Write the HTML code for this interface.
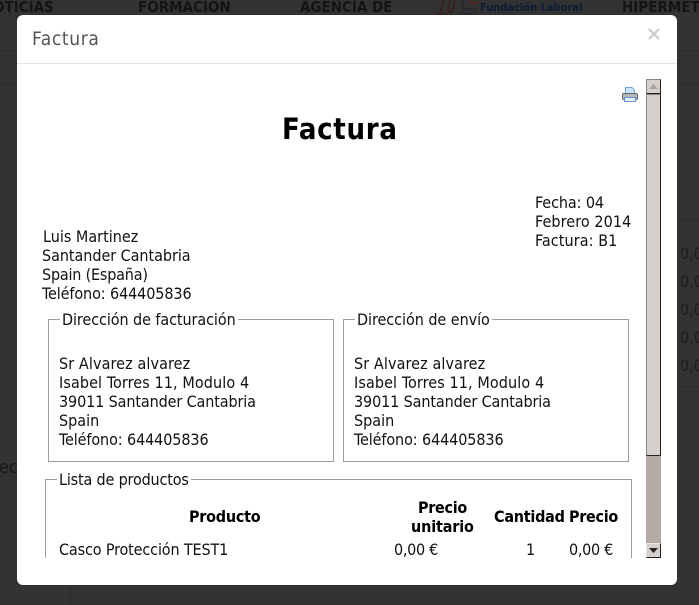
<!DOCTYPE html>
<html><head><meta charset="utf-8"><style>
html,body{margin:0;padding:0}
body{width:699px;height:605px;overflow:hidden;position:relative;background:#323232;font-family:"DejaVu Sans Condensed","DejaVu Sans",sans-serif;font-size:16px;color:#111}
.a{position:absolute;white-space:nowrap;line-height:19px}
.bg{color:#141414;font-weight:bold;font-size:15px}
.b{font-weight:bold;color:#000}
.l{position:absolute;background:#2a2a2a}
#m{position:absolute;left:17px;top:15px;width:660px;height:570px;background:#fff;border-radius:6px;overflow:hidden}
#m .a{margin-left:-17px;margin-top:-15px}
.fs{position:absolute;border:1px solid #a39c9c;box-sizing:border-box;margin-left:-17px;margin-top:-15px}
.lg{background:#fff;padding:0 2px}
</style></head><body>
<div class="l" style="left:306px;top:0;width:1px;height:15px"></div>
<div class="l" style="left:70px;top:585px;width:1px;height:20px"></div>
<div class="l" style="left:0;top:50px;width:17px;height:1px"></div>
<div class="l" style="left:0;top:83px;width:17px;height:1px"></div>
<div class="l" style="left:677px;top:50px;width:22px;height:1px"></div>
<div class="l" style="left:677px;top:83px;width:22px;height:1px"></div>
<div class="l" style="left:677px;top:220px;width:22px;height:1px"></div>
<div class="l" style="left:677px;top:386px;width:22px;height:1px"></div>
<div class="a bg" style="left:-7px;top:-2px">OTICIAS</div>
<div class="a bg" style="left:138px;top:-2px">FORMACIÓN</div>
<div class="a bg" style="left:300px;top:-2px">AGENCIA DE</div>
<svg style="position:absolute;left:434px;top:0" width="46" height="15" viewBox="0 0 46 15"><path d="M1 14H14M10 0L6 12M16 0L14 10Q15 13 18 12L21 0" stroke="#3a1a12" stroke-width="1.300" fill="none"/><path d="M24 14H42M42 14V8M30 0Q26 6 30 9H40" stroke="#20242c" stroke-width="1.200" fill="none"/><path d="M36 0Q38 5 44 2" stroke="#5a2015" stroke-width="1.500" fill="none"/></svg>
<div class="a bg" style="left:480px;top:-2px;font-size:11px;color:#0b1a36">Fundación Laboral</div>
<div class="a bg" style="left:622px;top:-2px">HIPERMETA</div>
<div class="a" style="left:-1px;top:458px;color:#181818;font-size:18px">ec</div>
<div class="a" style="left:680px;top:244px;color:#1c1c1c">0,0</div>
<div class="a" style="left:680px;top:272px;color:#1c1c1c">0,0</div>
<div class="a" style="left:680px;top:300px;color:#1c1c1c">0,0</div>
<div class="a" style="left:680px;top:328px;color:#1c1c1c">0,0</div>
<div class="a" style="left:680px;top:356px;color:#1c1c1c">0,0</div>

<div id="m">
<div class="a" style="left:32px;top:29px;font-size:19px;color:#555;letter-spacing:.65px;line-height:20px">Factura</div>
<div style="position:absolute;left:0;top:48px;width:660px;height:1px;background:#e5e5e5"></div>
<svg style="position:absolute;left:630px;top:12px" width="14" height="14" viewBox="0 0 14 14"><path d="M2 2L12 12M12 2L2 12" stroke="#cfcfcf" stroke-width="2.400" fill="none"/></svg>

<svg style="position:absolute;left:604px;top:71px" width="18" height="18" viewBox="0 0 18 18"><path d="M4.500 1.500H11L13.500 4V9H4.500Z" fill="#cfe3f8" stroke="#6fa5dc"/><rect x="1.500" y="7.500" width="15" height="6" rx="1.500" fill="#b4b8bc" stroke="#5e6469"/><rect x="3.500" y="11.500" width="11" height="4" fill="#e8eef5" stroke="#5f93c9"/></svg>

<div class="a b" style="left:282px;top:112px;font-size:29px;line-height:34px;letter-spacing:.7px">Factura</div>

<div class="a" style="left:535px;top:193px;letter-spacing:-.1px">Fecha: 04</div>
<div class="a" style="left:535px;top:212px;letter-spacing:.08px">Febrero 2014</div>
<div class="a" style="left:535px;top:231px;letter-spacing:.08px">Factura: B1</div>

<div class="a" style="left:43px;top:227px">Luis Martinez</div>
<div class="a" style="left:42px;top:246px;letter-spacing:-.05px">Santander Cantabria</div>
<div class="a" style="left:42px;top:265px;letter-spacing:-.2px">Spain (España)</div>
<div class="a" style="left:42px;top:284px;letter-spacing:-.1px">Teléfono: 644405836</div>

<div class="fs" style="left:48px;top:319px;width:286px;height:143px"></div>
<div class="a lg" style="left:60px;top:310px;letter-spacing:-.08px">Dirección de facturación</div>
<div class="a" style="left:59px;top:354px;letter-spacing:.1px">Sr Alvarez alvarez</div>
<div class="a" style="left:59px;top:373px;letter-spacing:.1px">Isabel Torres 11, Modulo 4</div>
<div class="a" style="left:59px;top:392px;letter-spacing:-.12px">39011 Santander Cantabria</div>
<div class="a" style="left:59px;top:411px">Spain</div>
<div class="a" style="left:59px;top:430px;letter-spacing:-.1px">Teléfono: 644405836</div>

<div class="fs" style="left:343px;top:319px;width:286px;height:143px"></div>
<div class="a lg" style="left:355px;top:310px;letter-spacing:-.05px">Dirección de envío</div>
<div class="a" style="left:354px;top:354px;letter-spacing:.1px">Sr Alvarez alvarez</div>
<div class="a" style="left:354px;top:373px;letter-spacing:.1px">Isabel Torres 11, Modulo 4</div>
<div class="a" style="left:354px;top:392px;letter-spacing:-.12px">39011 Santander Cantabria</div>
<div class="a" style="left:354px;top:411px">Spain</div>
<div class="a" style="left:354px;top:430px;letter-spacing:-.1px">Teléfono: 644405836</div>

<div class="fs" style="left:45px;top:479px;width:587px;height:100px"></div>
<div class="a lg" style="left:57px;top:470px;letter-spacing:-.17px">Lista de productos</div>
<div class="a b" style="left:189px;top:507px;letter-spacing:-.25px">Producto</div>
<div class="a b" style="left:418px;top:498px;letter-spacing:-.3px">Precio</div>
<div class="a b" style="left:411px;top:517px;letter-spacing:-.15px">unitario</div>
<div class="a b" style="left:494px;top:507px;letter-spacing:-.25px">Cantidad</div>
<div class="a b" style="left:569px;top:507px;letter-spacing:-.3px">Precio</div>
<div class="a" style="left:59px;top:540px;letter-spacing:-.14px">Casco Protección TEST1</div>
<div class="a" style="left:394px;top:540px;letter-spacing:-.3px">0,00 €</div>
<div class="a" style="left:526px;top:540px">1</div>
<div class="a" style="left:569px;top:540px;letter-spacing:-.3px">0,00 €</div>
<div style="position:absolute;left:18px;top:543px;width:620px;height:27px;background:#fff"></div>

<div style="position:absolute;left:629px;top:64px;width:15px;height:479px;background:#b3aaa6"></div>
<div style="position:absolute;left:629px;top:64px;width:15px;height:15px;box-sizing:border-box;background:#d5d0cc;border:1px solid #222;border-color:#8a8380 #222 #222 #8a8380"></div>
<svg style="position:absolute;left:632px;top:69px" width="9" height="5"><path d="M4.500 0L9 5H0Z" fill="#a9a39f"/></svg>
<div style="position:absolute;left:629px;top:79px;width:15px;height:362px;box-sizing:border-box;background:#d5d0cc;border:1px solid #222;border-color:#8a8380 #222 #222 #8a8380"></div>
<div style="position:absolute;left:629px;top:528px;width:15px;height:15px;box-sizing:border-box;background:#d5d0cc;border:1px solid #222;border-color:#e8e4e1 #222 #222 #e8e4e1"></div>
<svg style="position:absolute;left:632px;top:533px" width="9" height="5"><path d="M0 0H9L4.500 5Z" fill="#222"/></svg>
</div>
</body></html>
